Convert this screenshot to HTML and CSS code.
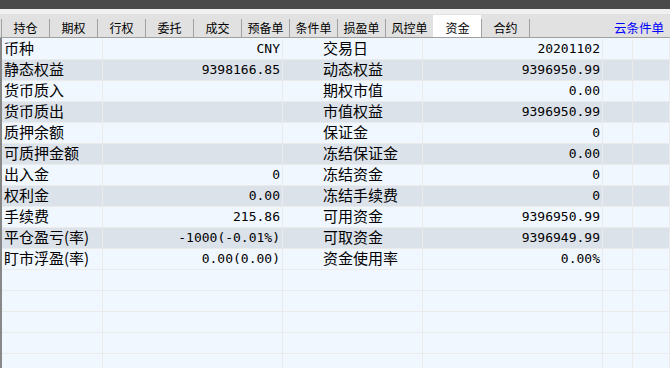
FILE: index.html
```html
<html>
  <head>
    <meta http-equiv="content-type" content="text/html; charset=UTF-8">
    <title>资金</title>
    <link rel="stylesheet" href="styles.css">
  </head>
  <body>
    <div class="topbar"></div>
    <div class="strip"></div>
    <div class="tabbar">
      <div class="tab">持仓</div>
      <div class="tab">期权</div>
      <div class="tab">行权</div>
      <div class="tab">委托</div>
      <div class="tab">成交</div>
      <div class="tab">预备单</div>
      <div class="tab">条件单</div>
      <div class="tab">损盈单</div>
      <div class="tab">风控单</div>
      <div class="tab tab_on">资金</div>
      <div class="tab">合约</div>
      <div class="tab tab_end"></div>
      <div class="cloud">云条件单</div>
    </div>
    <div class="grid">
      <div class="row"><div class="lab">币种</div><div class="val">CNY</div><div class="lab2">交易日</div><div class="val">20201102</div><div class="c5"></div><div class="c6"></div></div>
      <div class="row dark"><div class="lab">静态权益</div><div class="val">9398166.85</div><div class="lab2">动态权益</div><div class="val">9396950.99</div><div class="c5"></div><div class="c6"></div></div>
      <div class="row"><div class="lab">货币质入</div><div class="val"></div><div class="lab2">期权市值</div><div class="val">0.00</div><div class="c5"></div><div class="c6"></div></div>
      <div class="row dark"><div class="lab">货币质出</div><div class="val"></div><div class="lab2">市值权益</div><div class="val">9396950.99</div><div class="c5"></div><div class="c6"></div></div>
      <div class="row"><div class="lab">质押余额</div><div class="val"></div><div class="lab2">保证金</div><div class="val">0</div><div class="c5"></div><div class="c6"></div></div>
      <div class="row dark"><div class="lab">可质押金额</div><div class="val"></div><div class="lab2">冻结保证金</div><div class="val">0.00</div><div class="c5"></div><div class="c6"></div></div>
      <div class="row"><div class="lab">出入金</div><div class="val">0</div><div class="lab2">冻结资金</div><div class="val">0</div><div class="c5"></div><div class="c6"></div></div>
      <div class="row dark"><div class="lab">权利金</div><div class="val">0.00</div><div class="lab2">冻结手续费</div><div class="val">0</div><div class="c5"></div><div class="c6"></div></div>
      <div class="row"><div class="lab">手续费</div><div class="val">215.86</div><div class="lab2">可用资金</div><div class="val">9396950.99</div><div class="c5"></div><div class="c6"></div></div>
      <div class="row dark"><div class="lab">平仓盈亏(率)</div><div class="val">-1000(-0.01%)</div><div class="lab2">可取资金</div><div class="val">9396949.99</div><div class="c5"></div><div class="c6"></div></div>
      <div class="row"><div class="lab">盯市浮盈(率)</div><div class="val">0.00(0.00)</div><div class="lab2">资金使用率</div><div class="val">0.00%</div><div class="c5"></div><div class="c6"></div></div>
      <div class="row"><div class="lab"></div><div class="val"></div><div class="lab2"></div><div class="val"></div><div class="c5"></div><div class="c6"></div></div>
      <div class="row"><div class="lab"></div><div class="val"></div><div class="lab2"></div><div class="val"></div><div class="c5"></div><div class="c6"></div></div>
      <div class="row"><div class="lab"></div><div class="val"></div><div class="lab2"></div><div class="val"></div><div class="c5"></div><div class="c6"></div></div>
      <div class="row"><div class="lab"></div><div class="val"></div><div class="lab2"></div><div class="val"></div><div class="c5"></div><div class="c6"></div></div>
      <div class="row"><div class="lab"></div><div class="val"></div><div class="lab2"></div><div class="val"></div><div class="c5"></div><div class="c6"></div></div>
    </div>
  </body>
</html>
```

FILE: styles.css
```css
body { margin:0; overflow:hidden; background:#f0f7ff; font-family:"Noto Sans CJK SC", sans-serif; color:#000; }
.topbar { height:9px; background:#4a4a4a; }
.strip { height:5px; background:#f0f0f0; }
.tabbar { display:flex; align-items:flex-end; height:23px; padding-left:1px; background:#e1e1e1; border-bottom:1px solid #a0a0a0; font-size:12px; }
.tab { width:47px; height:18px; line-height:18px; border-left:1px solid #a0a0a0; text-align:center; }
.tab_on { height:22px; line-height:26px; background:#fff; border-left-color:#fff; }
.tab_end { width:0; }
.cloud { margin-left:auto; padding-right:6px; height:18px; line-height:18px; font-size:12.5px; color:#0000ff; }
.grid { border-left:2px solid #888; padding-top:1px; height:329px; overflow:hidden; }
.row { display:grid; grid-template-columns:101px 180px 140px 180px 30px 1fr; height:21px; }
.row > div { height:20px; border-right:1px solid #ebebeb; border-bottom:1px solid #ebebeb; }
.dark { background:#dce2ea; }
.lab, .lab2 { font-size:15px; line-height:18px; padding-left:2px; white-space:nowrap; }
.lab2 { padding-left:40px; }
.val { font-family:"DejaVu Sans Mono", monospace; font-size:13px; line-height:19px; text-align:right; padding-right:2px; }
```
